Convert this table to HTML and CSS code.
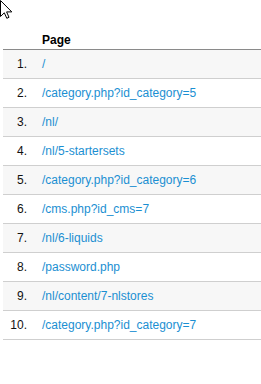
FILE: index.html
```html
<!DOCTYPE html>
<html>
<head>
<meta charset="utf-8">
<link rel="stylesheet" href="styles.css">
</head>
<body>
<svg class="cursor" width="13" height="19" viewBox="0 0 13 19"><path d="M0.5 0.5 L0.5 16.5 L4.3 12.8 L6.8 18.3 L9 17.3 L6.6 11.9 L11.8 11.9 Z" fill="#fff" stroke="#000" stroke-width="1" stroke-linejoin="miter"/></svg>
<div class="wrap">
<table class="pages">
<thead><tr><th class="num"></th><th class="page">Page</th></tr></thead>
<tbody>
<tr><td class="num">1.</td><td class="page"><a>/</a></td></tr>
<tr><td class="num">2.</td><td class="page"><a>/category.php?id_category=5</a></td></tr>
<tr><td class="num">3.</td><td class="page"><a>/nl/</a></td></tr>
<tr><td class="num">4.</td><td class="page"><a>/nl/5-startersets</a></td></tr>
<tr><td class="num">5.</td><td class="page"><a>/category.php?id_category=6</a></td></tr>
<tr><td class="num">6.</td><td class="page"><a>/cms.php?id_cms=7</a></td></tr>
<tr><td class="num">7.</td><td class="page"><a>/nl/6-liquids</a></td></tr>
<tr><td class="num">8.</td><td class="page"><a>/password.php</a></td></tr>
<tr><td class="num">9.</td><td class="page"><a>/nl/content/7-nlstores</a></td></tr>
<tr><td class="num">10.</td><td class="page"><a>/category.php?id_category=7</a></td></tr>
</tbody>
</table>
</div>
</body>
</html>
```
FILE: styles.css
```css
html, body { margin: 0; padding: 0; background: #fff; overflow: hidden; }
body { font-family: "Liberation Sans", Arial, sans-serif; font-size: 12px; color: #000; width: 261px; height: 384px; position: relative; }
.cursor { position: absolute; left: 0; top: 0; }
.wrap { padding-top: 31px; padding-left: 3px; }
.pages { border-collapse: collapse; width: 100%; }
.pages th { font-weight: bold; text-align: left; height: 18px; padding: 0; border-bottom: 1px solid #8a8a8a; vertical-align: middle; }
.pages td { height: 28px; padding: 0; border-bottom: 1px solid #cfcfcf; vertical-align: middle; }
.pages tbody tr:nth-child(odd) td { background: #f7f7f7; }
.pages .num { width: 24px; text-align: right; padding-right: 15px; color: #111; }
.pages .page { padding-left: 0; }
.pages a { color: #1b8fd2; text-decoration: none; }
```
